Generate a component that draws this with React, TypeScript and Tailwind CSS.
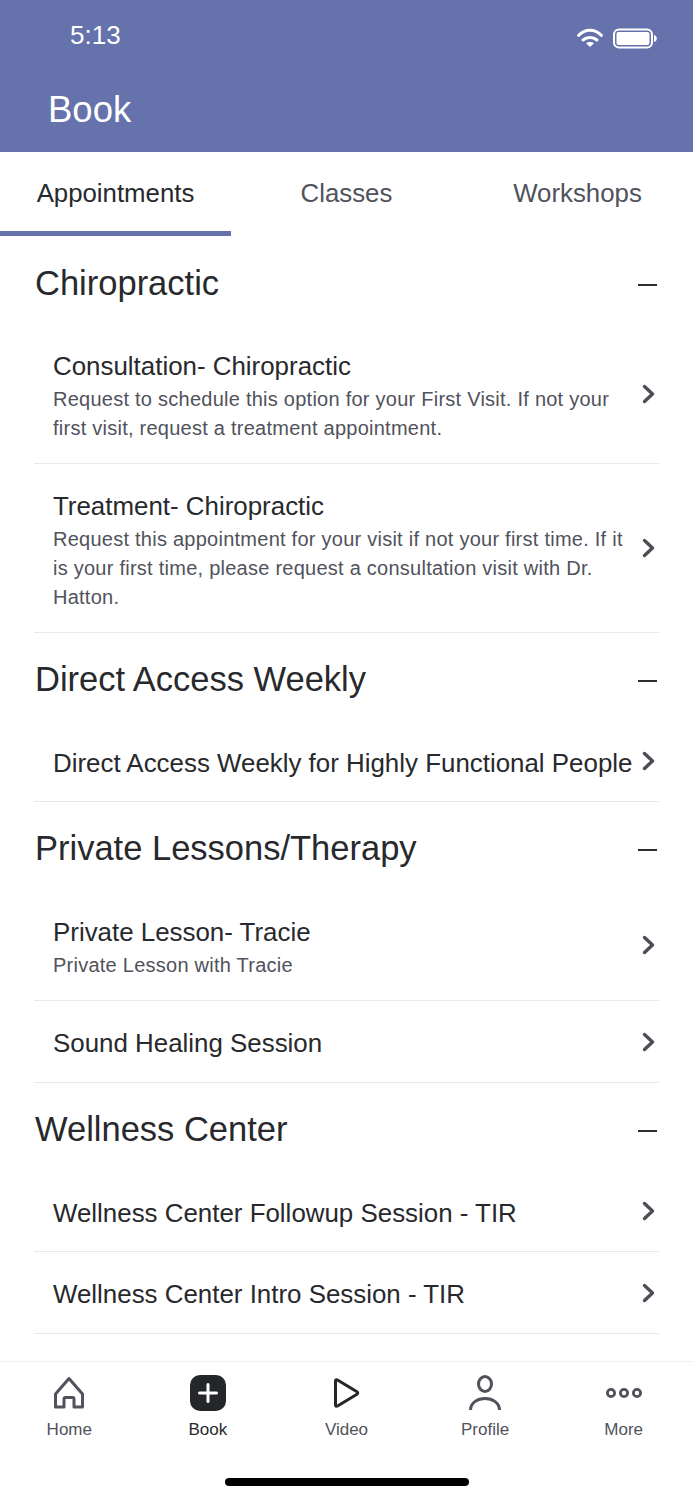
import React from "react";

const Chevron = () => (
  <svg width="14" height="20" viewBox="0 0 14 20" fill="none" className="mr-[3px] shrink-0">
    <path d="M2.5 2.5 L10.5 10 L2.5 17.5" stroke="#4b4d57" strokeWidth="3.4" strokeLinecap="round" strokeLinejoin="round" />
  </svg>
);

const SectionHead = ({ title, first }: { title: string; first?: boolean }) => (
  <div className={`flex h-[88px] items-start justify-between pl-[35px] pr-[36px] ${first ? "pt-[27px]" : "pt-[26px]"}`}>
    <span className="text-[34.5px] leading-[40px] text-[#28292d]">{title}</span>
    <span className="mt-[21px] h-[2px] w-[19px] bg-[#2b2c30]" />
  </div>
);

const Row = ({ title, desc, tall }: { title: string; desc?: string[]; tall?: boolean }) => (
  <div className="mx-[34px] flex items-center justify-between border-b border-[#e9e9ec] pl-[19px]">
    <div className={`min-w-0 pt-[26px] ${tall ? "pb-[23px]" : "pb-[22px]"}`}>
      <div className="whitespace-nowrap text-[25.9px] leading-[32px] text-[#28292d]">{title}</div>
      {desc && (
        <div className="mt-[3px] -mb-[2px] text-[20px] leading-[29px] tracking-[0.25px] text-[#50525c]">
          {desc.map((d) => (
            <div key={d} className="whitespace-nowrap">{d}</div>
          ))}
        </div>
      )}
    </div>
    <Chevron />
  </div>
);

const NavItem = ({ label, active, children }: { label: string; active?: boolean; children: React.ReactNode }) => (
  <div className="flex flex-1 flex-col items-center">
    <div className="flex h-[38px] items-center justify-center">{children}</div>
    <span className={`mt-[8px] text-[17px] leading-[20px] ${active ? "text-[#28292d]" : "text-[#50525c]"}`}>{label}</span>
  </div>
);

export default function App() {
  return (
    <div className="flex h-[1500px] w-[693px] flex-col overflow-hidden bg-white font-['Liberation_Sans',Arial,sans-serif]">
      <header className="h-[152px] shrink-0 bg-[#6572ac] text-white">
        <div className="flex h-[72px] items-center justify-between pl-[70px] pr-[36px]">
          <span className="-mt-[2px] text-[26px] leading-[32px]">5:13</span>
          <div className="mt-[4px] flex items-center gap-[9px]">
            <svg width="28" height="22" viewBox="0 0 28 22" fill="none">
              <path d="M2.5 8.5 C9 1.5 19 1.5 25.5 8.5" stroke="white" strokeWidth="3" strokeLinecap="round" />
              <path d="M7 13 C11 9.5 17 9.5 21 13" stroke="white" strokeWidth="3" strokeLinecap="round" />
              <path d="M14 20 L10 16.3 C12 14.6 16 14.6 18 16.3 Z" fill="white" />
            </svg>
            <svg width="44" height="22" viewBox="0 0 44 22" fill="none">
              <rect x="1" y="2.5" width="38" height="18" rx="5" stroke="white" strokeWidth="2" />
              <rect x="3.5" y="5" width="33" height="13" rx="2" fill="white" />
              <path d="M41 8 C43 8.5 43.8 10 43.8 11.5 C43.8 13 43 14.5 41 15 Z" fill="white" />
            </svg>
          </div>
        </div>
        <div className="pl-[48px] pt-[16px] text-[36.5px] leading-[44px]">Book</div>
      </header>

      <nav className="flex h-[84px] shrink-0 text-[25.8px]">
        <div className="flex w-[231px] items-center justify-center border-b-[5px] border-[#6572ac] pt-[3px] text-[#28292d]">Appointments</div>
        <div className="flex w-[231px] items-center justify-center pb-[2px] text-[#50525c]">Classes</div>
        <div className="flex w-[231px] items-center justify-center pb-[2px] text-[#50525c]">Workshops</div>
      </nav>

      <main className="min-h-0 flex-1 overflow-hidden">
        <SectionHead title="Chiropractic" first />
        <Row
          title="Consultation- Chiropractic"
          desc={["Request to schedule this option for your First Visit. If not your", "first visit, request a treatment appointment."]}
        />
        <Row
          title="Treatment- Chiropractic"
          desc={["Request this appointment for your visit if not your first time. If it", "is your first time, please request a consultation visit with Dr.", "Hatton."]}
        />
        <SectionHead title="Direct Access Weekly" />
        <Row title="Direct Access Weekly for Highly Functional People" />
        <SectionHead title="Private Lessons/Therapy" />
        <Row title="Private Lesson- Tracie" desc={["Private Lesson with Tracie"]} />
        <Row title="Sound Healing Session" tall />
        <SectionHead title="Wellness Center" />
        <Row title="Wellness Center Followup Session - TIR" />
        <Row title="Wellness Center Intro Session - TIR" tall />
      </main>

      <footer className="relative h-[139px] shrink-0 border-t border-[#f0f0f2] pt-[12px]">
        <div className="flex">
          <NavItem label="Home">
            <svg width="32" height="34" viewBox="0 0 32 34" fill="none">
              <path
                d="M2.5 31 V18 L16 2.5 L29.5 18 V31 H21 V23 Q21 21.5 19.5 21.5 H12.5 Q11 21.5 11 23 V31 Z"
                stroke="#50525c"
                strokeWidth="3"
                strokeLinejoin="round"
              />
            </svg>
          </NavItem>
          <NavItem label="Book" active>
            <div className="flex h-[36px] w-[36px] items-center justify-center rounded-[10px] bg-[#25262a]">
              <svg width="22" height="22" viewBox="0 0 22 22" fill="none">
                <path d="M11 2.5 V19.5 M2.5 11 H19.5" stroke="white" strokeWidth="3" strokeLinecap="round" />
              </svg>
            </div>
          </NavItem>
          <NavItem label="Video">
            <svg width="28" height="32" viewBox="0 0 28 32" fill="none" className="ml-[2px]">
              <path
                d="M2.5 4 Q2.5 2 4.5 3 L24 14.8 Q25.5 16 24 17.2 L4.5 29 Q2.5 30 2.5 28 Z"
                stroke="#25262a"
                strokeWidth="3"
                strokeLinejoin="round"
              />
            </svg>
          </NavItem>
          <NavItem label="Profile">
            <svg width="34" height="38" viewBox="0 0 34 38" fill="none">
              <ellipse cx="17" cy="10" rx="6.5" ry="7.5" stroke="#50525c" strokeWidth="3" />
              <path d="M2.5 36 C3 20.7 31 20.7 31.5 36" stroke="#50525c" strokeWidth="3" />
            </svg>
          </NavItem>
          <NavItem label="More">
            <svg width="36" height="12" viewBox="0 0 36 12" fill="none">
              <circle cx="5" cy="6" r="3.6" stroke="#50525c" strokeWidth="2.8" />
              <circle cx="18" cy="6" r="3.6" stroke="#50525c" strokeWidth="2.8" />
              <circle cx="31" cy="6" r="3.6" stroke="#50525c" strokeWidth="2.8" />
            </svg>
          </NavItem>
        </div>
        <div className="absolute bottom-[14px] left-[225px] h-[8px] w-[244px] rounded-full bg-black" />
      </footer>
    </div>
  );
}
